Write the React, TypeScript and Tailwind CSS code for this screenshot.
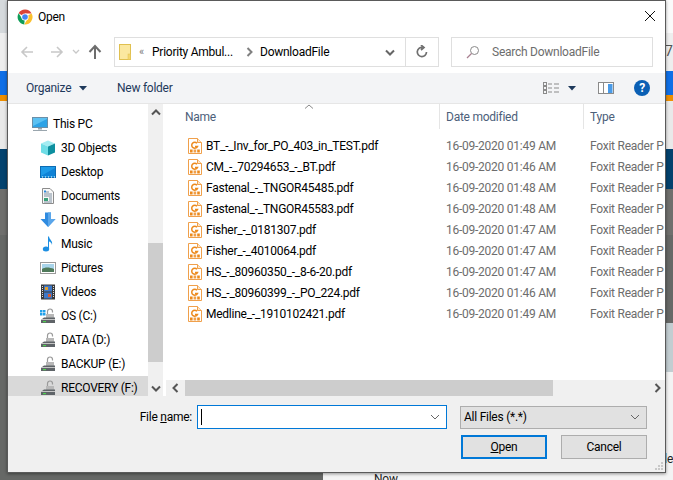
import React from "react";

const sans = "[font-family:Roboto,'Noto_Sans',sans-serif]";

const ChromeIcon = () => (
  <svg width="16" height="16" viewBox="0 0 16 16">
    <path d="M8 8 L1.6 4.3 A7.4 7.4 0 0 1 14.6 4.5 L8 4.5 Z" fill="#db4437" />
    <path d="M8 8 L14.6 4.5 A7.4 7.4 0 0 1 7.2 15.4 L10.8 9.6 Z" fill="#fbc02d" />
    <path d="M8 8 L7.2 15.4 A7.4 7.4 0 0 1 1.6 4.3 L5 9.6 Z" fill="#0f9d58" />
    <circle cx="8" cy="8" r="3.6" fill="#fff" />
    <circle cx="8" cy="8" r="2.8" fill="#4285f4" />
  </svg>
);

const PdfIcon = () => (
  <svg width="14" height="16" viewBox="0 0 14 16" className="shrink-0">
    <path d="M0.5 0.5 H9.5 L13.5 4.5 V15.5 H0.5 Z" fill="#fff" stroke="#f0a04b" />
    <path d="M9.5 0.5 V4.5 H13.5" fill="#fde6c8" stroke="#f0a04b" />
    <path d="M9 5.2 A3 3 0 1 0 9.4 8.6 H7" fill="none" stroke="#ec8a1d" strokeWidth="1.5" />
    <rect x="2" y="11.5" width="2.6" height="3" fill="#ec8a1d" />
    <rect x="5.6" y="11.5" width="2.6" height="3" fill="#f0a04b" />
    <rect x="9.2" y="11.5" width="2.6" height="3" fill="#ec8a1d" />
  </svg>
);

const PcIcon = () => (
  <svg width="16" height="16" viewBox="0 0 16 16">
    <rect x="0.5" y="1.5" width="15" height="10" fill="#5cc1f2" stroke="#6b8fa8" />
    <path d="M1 10 L15 3 V11 H1 Z" fill="#2ea3e6" />
    <rect x="6" y="12" width="4" height="1.5" fill="#9aa6ae" />
    <rect x="1" y="14" width="14" height="1" fill="#9aa6ae" />
  </svg>
);

const CubeIcon = () => (
  <svg width="16" height="16" viewBox="0 0 16 16">
    <path d="M8 0.5 L15 3.5 L8 6.5 L1 3.5 Z" fill="#a4ecf2" />
    <path d="M1 3.5 L8 6.5 V15.5 L1 12.5 Z" fill="#6fdde6" />
    <path d="M15 3.5 L8 6.5 V15.5 L15 12.5 Z" fill="#0d8f9f" />
  </svg>
);

const DesktopIcon = () => (
  <svg width="16" height="16" viewBox="0 0 16 16">
    <rect x="0.5" y="2.5" width="15" height="11" fill="#1e9be8" stroke="#0d6cb3" />
    <path d="M1 12 L15 4 V12 Z" fill="#0f82d6" />
    <path d="M2 13h1M5 13h1M8 13h1M11 13h1M14 13h1" stroke="#fff" />
  </svg>
);

const DocIcon = () => (
  <svg width="16" height="16" viewBox="0 0 16 16">
    <path d="M2.5 0.5 H10 L13.5 4 V15.5 H2.5 Z" fill="#f8f8f8" stroke="#8c8c8c" />
    <path d="M6 4h3M4 6h8M4 8h8M9 10h3M9 12h3M4 14h8" stroke="#7c8ea0" />
    <rect x="4" y="2.5" width="2" height="2" fill="#2d88d8" />
    <rect x="4" y="10" width="4" height="3" fill="#3aa07a" />
  </svg>
);

const DownIcon = () => (
  <svg width="16" height="16" viewBox="0 0 16 16">
    <path d="M5 0.5 H11 V7 H15.5 L8 15 L0.5 7 H5 Z" fill="#2f8be0" />
    <path d="M8 0.5 H11 V7 H15.5 L8 15 Z" fill="#5aa6ea" />
  </svg>
);

const MusicIcon = () => (
  <svg width="16" height="16" viewBox="0 0 16 16">
    <ellipse cx="6" cy="13" rx="3.2" ry="2.5" fill="#1d8fe2" />
    <path d="M8 13 V0.5 H9 C9.5 4 13 4.5 12 9 C11.5 6.5 10 6 9 5.6 V13 Z" fill="#1d8fe2" />
  </svg>
);

const PictureIcon = () => (
  <svg width="16" height="16" viewBox="0 0 16 16">
    <rect x="0.5" y="2.5" width="15" height="11" fill="#fff" stroke="#9a9a9a" />
    <rect x="2" y="4" width="12" height="8" fill="#a8d4ea" />
    <path d="M2 9 C5 7 9 7 14 9 V12 H2 Z" fill="#4f7a5a" />
  </svg>
);

const VideoIcon = () => (
  <svg width="16" height="16" viewBox="0 0 16 16">
    <rect x="1" y="0.5" width="14" height="15" fill="#3a3a3a" />
    <rect x="4" y="1.5" width="8" height="6" fill="#3f78c8" />
    <rect x="4" y="8.5" width="8" height="6" fill="#3f78c8" />
    <rect x="5" y="3" width="3" height="3" fill="#e0a030" />
    <rect x="8" y="10" width="3" height="3" fill="#d85a30" />
    <path d="M2.5 2v12M13.5 2v12" stroke="#ddd" strokeDasharray="1 1" />
  </svg>
);

const DriveIcon = ({ os }: { os?: boolean }) => (
  <svg width="16" height="16" viewBox="0 0 16 16">
    {os && (
      <g fill="#20a0ea">
        <rect x="0" y="2" width="2.5" height="2.5" />
        <rect x="3" y="2" width="2.5" height="2.5" />
        <rect x="0" y="5" width="2.5" height="2.5" />
        <rect x="3" y="5" width="2.5" height="2.5" />
      </g>
    )}
    <path d="M7.5 6 V3.5 A2.5 2.5 0 0 1 12.5 3.5 V4.5" fill="none" stroke="#9a9a9a" strokeWidth="1.2" />
    <rect x="6" y="6" width="8" height="4" fill="#b8b8b8" />
    <path d="M2 11 L4 9.5 H15 V15 H1 V11 Z" fill="#5f6468" />
    <rect x="1" y="11" width="14" height="1" fill="#c4c4c4" />
    <rect x="3" y="13" width="3" height="1.2" fill="#4fd04f" />
  </svg>
);

const Chevron = ({ dir, color = "#555" }: { dir: "up" | "down" | "left" | "right"; color?: string }) => {
  const d = {
    up: "M1 6.5 L5 2.5 L9 6.5",
    down: "M1 3.5 L5 7.5 L9 3.5",
    left: "M6.5 1 L2.5 5 L6.5 9",
    right: "M3.5 1 L7.5 5 L3.5 9",
  }[dir];
  return (
    <svg width="10" height="10" viewBox="0 0 10 10">
      <path d={d} fill="none" stroke={color} strokeWidth="2" />
    </svg>
  );
};

const places = [
  { label: "3D Objects", icon: <CubeIcon /> },
  { label: "Desktop", icon: <DesktopIcon /> },
  { label: "Documents", icon: <DocIcon /> },
  { label: "Downloads", icon: <DownIcon /> },
  { label: "Music", icon: <MusicIcon /> },
  { label: "Pictures", icon: <PictureIcon /> },
  { label: "Videos", icon: <VideoIcon /> },
  { label: "OS (C:)", icon: <DriveIcon os /> },
  { label: "DATA (D:)", icon: <DriveIcon /> },
  { label: "BACKUP (E:)", icon: <DriveIcon /> },
];

const files = [
  { name: "BT_-_Inv_for_PO_403_in_TEST.pdf", date: "16-09-2020 01:49 AM" },
  { name: "CM_-_70294653_-_BT.pdf", date: "16-09-2020 01:46 AM" },
  { name: "Fastenal_-_TNGOR45485.pdf", date: "16-09-2020 01:48 AM" },
  { name: "Fastenal_-_TNGOR45583.pdf", date: "16-09-2020 01:48 AM" },
  { name: "Fisher_-_0181307.pdf", date: "16-09-2020 01:47 AM" },
  { name: "Fisher_-_4010064.pdf", date: "16-09-2020 01:47 AM" },
  { name: "HS_-_80960350_-_8-6-20.pdf", date: "16-09-2020 01:47 AM" },
  { name: "HS_-_80960399_-_PO_224.pdf", date: "16-09-2020 01:46 AM" },
  { name: "Medline_-_1910102421.pdf", date: "16-09-2020 01:49 AM" },
];

const Backdrop = () => (
  <div className="flex flex-col h-[480px] w-[673px] overflow-hidden">
    <div className="flex h-[33px] justify-between bg-[#fafafa]">
      <div className="w-[7px] bg-[#d5d9dc]" />
    </div>
    <div className="flex h-[38px] justify-end bg-[#eeeeee] text-[#555]">
      <span className="w-[8px] pt-[9px] text-[14px] leading-[18px]">7</span>
    </div>
    <div className="h-[24px] bg-[#0f6fe6]" />
    <div className="h-[6px] bg-[#ee8f00]" />
    <div className="h-[48px] bg-[#e9e9e9]" />
    <div className="h-[40px] bg-[#03426e]" />
    <div className="h-[46px] bg-[#6f6f6d]" />
    <div className="h-[88px] bg-[#666866]" />
    <div className="flex flex-1">
      <div className="w-[323px] bg-[#666866]" />
      <div className="flex-1 flex flex-col bg-[#c2cdd1]">
        <div className="h-[49px]" />
        <div className="flex-1 flex flex-col justify-end bg-[#f3f3f3] overflow-hidden">
          <div className="flex justify-end h-[22px] text-[12px] text-[#222]">de</div>
          <div className="h-[8px] pl-[51px] text-[12px] leading-[14px] text-[#222]">Now</div>
        </div>
      </div>
    </div>
  </div>
);

export default function App() {
  return (
    <div className={`relative h-[480px] w-[673px] overflow-hidden text-[12px] tracking-[-0.25px] ${sans}`}>
      <Backdrop />
      <div className="absolute left-[7px] top-0 flex h-[473px] w-[659px] flex-col border border-[#5a5a5a] bg-white shadow-[0_1px_3px_rgba(0,0,0,0.4)]">
        {/* title bar */}
        <div className="flex h-[31px] shrink-0 items-center pl-[9px] pr-[7px]">
          <ChromeIcon />
          <span className="ml-[5px] text-black">Open</span>
          <svg width="12" height="12" viewBox="0 0 12 12" className="ml-auto mr-[2px] mb-[1px]">
            <path d="M1 1 L11 11 M11 1 L1 11" stroke="#111" strokeWidth="1" />
          </svg>
        </div>

        {/* address row */}
        <div className="flex h-[41px] shrink-0 items-start pt-[5px]">
          <div className="flex h-[30px] w-[106px] shrink-0 items-center pl-[12px] text-[#c4c4c4]">
            <svg width="14" height="14" viewBox="0 0 14 14">
              <path d="M13 7 H2 M7 2 L2 7 L7 12" fill="none" stroke="#c8c8c8" strokeWidth="1.6" />
            </svg>
            <svg width="14" height="14" viewBox="0 0 14 14" className="ml-[16px]">
              <path d="M1 7 H12 M7 2 L12 7 L7 12" fill="none" stroke="#c8c8c8" strokeWidth="1.6" />
            </svg>
            <svg width="8" height="6" viewBox="0 0 8 6" className="ml-[8px]">
              <path d="M1 1 L4 4 L7 1" fill="none" stroke="#c8c8c8" strokeWidth="1.3" />
            </svg>
            <svg width="14" height="16" viewBox="0 0 14 16" className="ml-[8px]">
              <path d="M7 15 V3 M1.5 8 L7 2 L12.5 8" fill="none" stroke="#6d6d6d" strokeWidth="2" />
            </svg>
          </div>
          <div className="flex h-[30px] w-[325px] shrink-0 items-center whitespace-nowrap border-2 border-[#dfdfdf] [border-width:1.5px]">
            <svg width="12" height="16" viewBox="0 0 12 16" className="ml-[4px] shrink-0">
              <rect x="0.5" y="0.5" width="11" height="15" fill="#fbe8a0" stroke="#e0c050" />
              <rect x="9" y="10" width="2.5" height="5.5" fill="#f5d76e" stroke="#e0c050" strokeWidth="0.5" />
            </svg>
            <span className="ml-[8px] w-[13px] text-[11px] text-[#777]">«</span>
            <span className="w-[90px] text-black">Priority Ambul...</span>
            <span className="w-[18px] pl-[2px]">
              <Chevron dir="right" color="#808080" />
            </span>
            <span className="text-black">DownloadFile</span>
            <span className="ml-auto mr-[10px]">
              <Chevron dir="down" color="#666" />
            </span>
            <div className="flex h-full w-[33px] items-center justify-center border-l border-[#dfdfdf]">
              <svg width="14" height="14" viewBox="0 0 14 14">
                <path d="M11.5 7 A4.6 4.6 0 1 1 7.5 2.4 M6 0 L9 2.5 L6 5" fill="none" stroke="#707070" strokeWidth="1.7" />
              </svg>
            </div>
          </div>
          <div className="ml-[12px] flex h-[30px] w-[202px] shrink-0 items-center border-2 border-[#dfdfdf] [border-width:1.5px] pl-[14px]">
            <svg width="14" height="14" viewBox="0 0 14 14">
              <circle cx="8.5" cy="5.5" r="4" fill="none" stroke="#8a8a8a" />
              <path d="M5.5 8.5 L1 13" stroke="#a88090" strokeWidth="1.2" />
            </svg>
            <span className="ml-[12px] text-[#6d6d6d]">Search DownloadFile</span>
          </div>
        </div>

        {/* toolbar */}
        <div className="flex h-[31px] shrink-0 items-center border-b border-[#e6e6e6] bg-[#f3f4f6] pl-[18px] text-[#1e395b]">
          <span className="w-[51px]">Organize</span>
          <svg width="8" height="5" viewBox="0 0 8 5" className="ml-[2px]">
            <path d="M0 0 H8 L4 4.5 Z" fill="#1e395b" />
          </svg>
          <span className="ml-[30px]">New folder</span>
          <svg width="16" height="12" viewBox="0 0 16 12" className="ml-auto">
            <rect x="0.5" y="0.5" width="3" height="3" fill="none" stroke="#8a8a8a" />
            <rect x="0.5" y="4.5" width="3" height="3" fill="none" stroke="#8a8a8a" />
            <rect x="0.5" y="8.5" width="3" height="3" fill="none" stroke="#8a8a8a" />
            <path d="M5 2h4M11 2h5M5 6h4M11 6h5M5 10h4M11 10h5" stroke="#8a8a8a" />
          </svg>
          <svg width="8" height="5" viewBox="0 0 8 5" className="ml-[9px]">
            <path d="M0 0 H8 L4 4.5 Z" fill="#1e395b" />
          </svg>
          <svg width="16" height="12" viewBox="0 0 16 12" className="ml-[22px]">
            <rect x="0.5" y="0.5" width="15" height="11" fill="#fff" stroke="#8a8a8a" />
            <rect x="10" y="2" width="4.5" height="9" fill="#4a9be8" />
            <rect x="5" y="1" width="1" height="10" fill="#8a8a8a" />
          </svg>
          <div className="ml-[20px] mr-[15px] flex h-4 w-4 items-center justify-center rounded-full bg-[#0a5fb4] text-[12px] font-bold leading-none text-white">
            ?
          </div>
        </div>

        {/* panes */}
        <div className="flex min-h-0 flex-1">
          <div className="flex h-full w-[140px] shrink-0 flex-col overflow-hidden pt-[8px] text-black">
            <div className="flex h-6 shrink-0 items-center gap-[5px] pl-6">
              <PcIcon />
              <span>This PC</span>
            </div>
            {places.map((p) => (
              <div key={p.label} className="flex h-6 shrink-0 items-center gap-[5px] pl-8">
                {p.icon}
                <span className="whitespace-nowrap">{p.label}</span>
              </div>
            ))}
            <div className="flex h-6 shrink-0 items-center gap-[5px] bg-[#d9d9d9] pl-8">
              <DriveIcon />
              <span className="whitespace-nowrap">RECOVERY (F:)</span>
            </div>
          </div>

          <div className="flex w-[15px] shrink-0 flex-col items-center justify-between bg-[#f0f0f0]">
            <div className="flex h-[17px] w-full flex-col">
              <div className="flex h-[17px] items-center justify-center">
                <Chevron dir="up" />
              </div>
            </div>
            <div className="flex h-[153px] w-full flex-col">
              <div className="h-[119px] bg-[#cdcdcd]" />
              <div className="flex flex-1 items-end justify-center pb-[3px]">
                <Chevron dir="down" />
              </div>
            </div>
          </div>

          <div className="ml-[3px] flex min-w-0 flex-1 flex-col">
            <div className="flex h-[25px] shrink-0 items-center text-[#4c607a]">
              <div className="relative flex h-full w-[274px] items-center border-r border-[#e5e5e5] pl-[19px]">
                Name
                <svg width="10" height="5" viewBox="0 0 10 5" className="absolute left-[138px] top-0">
                  <path d="M1 4.5 L5 1 L9 4.5" fill="none" stroke="#8a8a8a" />
                </svg>
              </div>
              <div className="flex h-full w-[144px] items-center border-r border-[#e5e5e5] pl-[6px]">Date modified</div>
              <div className="pl-[6px]">Type</div>
            </div>
            <div className="flex min-h-0 flex-1 flex-col overflow-hidden pt-[6px]">
              {files.map((f) => (
                <div key={f.name} className="flex h-[21px] shrink-0 items-center whitespace-nowrap">
                  <div className="flex w-[274px] items-center gap-[4px] pl-[22px] text-black">
                    <PdfIcon />
                    {f.name}
                  </div>
                  <div className="w-[144px] pl-[6px] text-[#6d6d6d]">{f.date}</div>
                  <div className="pl-[6px] text-[#6d6d6d]">Foxit Reader P</div>
                </div>
              ))}
            </div>
            <div className="flex h-[16px] shrink-0 items-center bg-[#f0f0f0]">
              <div className="flex h-full w-[19px] items-center justify-center">
                <Chevron dir="left" />
              </div>
              <div className="h-full w-[368px] bg-[#cdcdcd]" />
              <div className="ml-auto flex h-full w-[16px] items-center justify-center">
                <Chevron dir="right" />
              </div>
            </div>
          </div>
        </div>

        {/* footer */}
        <div className="relative flex h-[76px] shrink-0 flex-col bg-[#f0f0f0] pr-[18px] pt-[9px]">
          <div className="flex items-center justify-end">
            <span className="mr-[5px] text-black">
              File <span className="underline">n</span>ame:
            </span>
            <div className="flex h-[24px] w-[250px] items-center border border-[#0078d7] bg-white pl-[3px] pr-[6px]">
              <span className="h-[16px] w-px bg-black" />
              <svg width="10" height="6" viewBox="0 0 10 6" className="ml-auto">
                <path d="M1 1 L5 5 L9 1" fill="none" stroke="#666" />
              </svg>
            </div>
            <div className="ml-[13px] flex h-[23px] w-[187px] items-center border border-[#adadad] bg-[#e1e1e1] pl-[3px] pr-[6px] text-black">
              All Files (*.*)
              <svg width="10" height="6" viewBox="0 0 10 6" className="ml-auto">
                <path d="M1 1 L5 5 L9 1" fill="none" stroke="#666" />
              </svg>
            </div>
          </div>
          <div className="mt-[6px] flex justify-end gap-[14px]">
            <button className="h-[24px] w-[86px] border-2 border-[#0078d7] bg-[#e1e1e1] text-black">
              <span className="underline">O</span>pen
            </button>
            <button className="h-[24px] w-[86px] border border-[#adadad] bg-[#e1e1e1] text-black">Cancel</button>
          </div>
          <svg width="10" height="10" viewBox="0 0 10 10" className="absolute bottom-[1px] right-[1px]">
            <path d="M7 1h2v2h-2zM4 4h2v2h-2zM7 4h2v2h-2zM1 7h2v2h-2zM4 7h2v2h-2zM7 7h2v2h-2z" fill="#c8c8c8" />
          </svg>
        </div>
      </div>
    </div>
  );
}
